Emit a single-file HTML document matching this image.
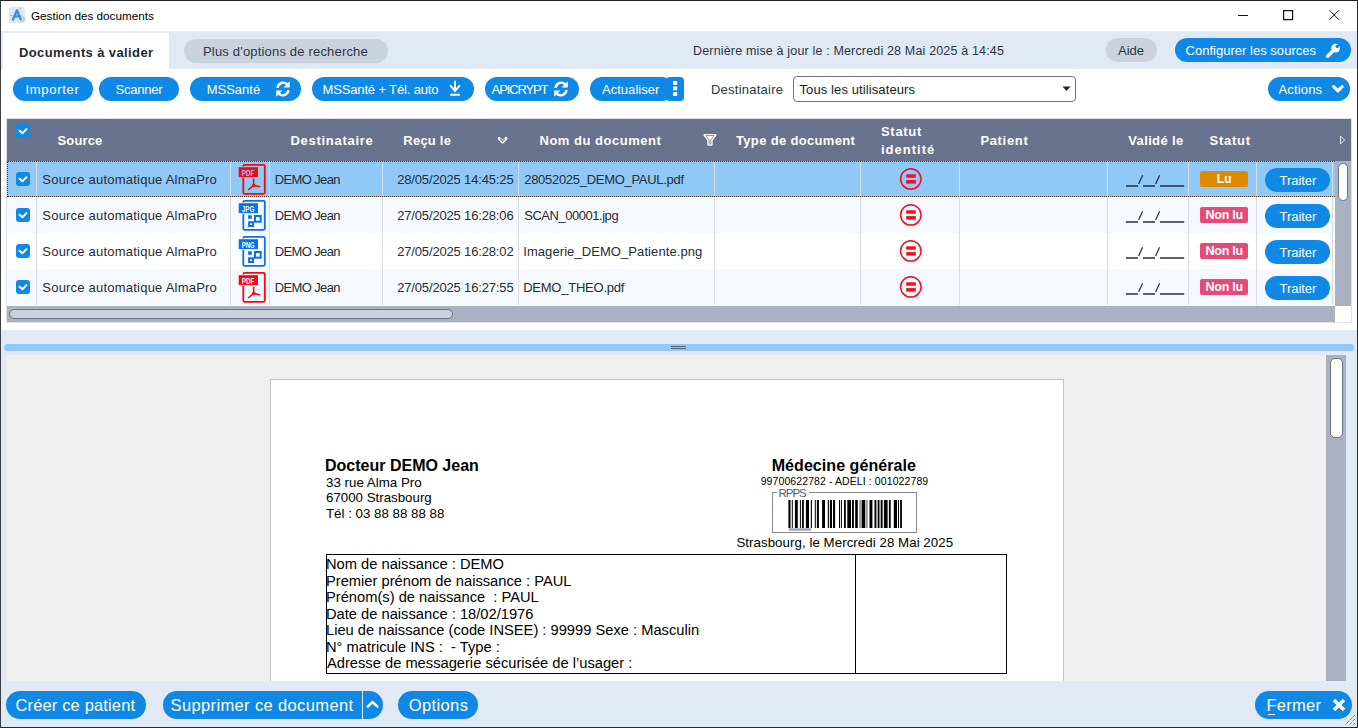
<!DOCTYPE html>
<html><head><meta charset="utf-8">
<style>
*{box-sizing:border-box;margin:0;padding:0}
html,body{width:1358px;height:728px;overflow:hidden;background:#fff;font-family:"Liberation Sans",sans-serif;position:relative}
.a{position:absolute}
.t{position:absolute;white-space:nowrap;line-height:1}
</style></head><body>
<svg class="a" style="left:9px;top:7px" width="17" height="17" viewBox="0 0 17 17"><rect x="0" y="0" width="16" height="16" rx="1.5" fill="#dfe8f3"/><path d="M3.6 13.4 L7.9 3.4 L12.2 13.4 M5.3 9.4 H10.6" stroke="#3d8fd8" stroke-width="2.4" fill="none" stroke-linejoin="round"/><path d="M9.5 3 L12 0.6 M1.5 8.5 L4 8.6 M11.5 8.6 q4.5 1.5 3.6 4.5 q-0.6 1.5 -2 1.3" stroke="#5a9bdc" stroke-width="0.9" fill="none" stroke-dasharray="1.4 0.7"/></svg>
<div class="t" style="left:31.00px;top:9.50px;font-size:11.7px;font-weight:400;color:#000;">Gestion des documents</div>
<svg class="a" style="left:1230px;top:5px" width="120" height="22"><path d="M8 10.5 H18" stroke="#111" stroke-width="1"/><rect x="53.6" y="5.6" width="9" height="9" stroke="#111" stroke-width="1.2" fill="none"/><path d="M99.4 5.2 L109 14.8 M109 5.2 L99.4 14.8" stroke="#111" stroke-width="1"/></svg>
<div class="a" style="left:1px;top:31px;width:1356px;height:38px;background:#e0e9f4"></div>
<div class="a" style="left:3px;top:33px;width:166px;height:36px;background:#fff"></div>
<div class="t" style="left:19.00px;top:46.00px;font-size:13px;font-weight:700;color:#1f2735;letter-spacing:0.383px;">Documents à valider</div>
<div class="a" style="left:184px;top:39px;width:204px;height:24px;background:#cad2dd;border-radius:12px"></div>
<div class="t" style="left:203.00px;top:45.00px;font-size:13px;font-weight:400;color:#2c3546;letter-spacing:0.181px;">Plus d'options de recherche</div>
<div class="t" style="left:693.00px;top:45.00px;font-size:12.5px;font-weight:400;color:#2c3546;letter-spacing:0.164px;">Dernière mise à jour le : Mercredi 28 Mai 2025 à 14:45</div>
<div class="a" style="left:1106px;top:38px;width:51px;height:24px;background:#cad2dd;border-radius:12px"></div>
<div class="t" style="left:1118.00px;top:44.00px;font-size:13px;font-weight:400;color:#2c3546;letter-spacing:-0.030px;">Aide</div>
<div class="a" style="left:1175px;top:38px;width:176px;height:24px;background:#0f88e6;border-radius:12px"></div>
<div class="t" style="left:1185.50px;top:44.00px;font-size:13px;font-weight:400;color:#fff;letter-spacing:0.021px;">Configurer les sources</div>
<svg class="a" style="left:1325px;top:43px" width="16" height="16" viewBox="0 0 16 16"><path d="M2.6 13.2 L9.8 6" stroke="#fff" stroke-width="3.6" stroke-linecap="round"/><circle cx="10.6" cy="5.1" r="4.4" fill="#fff"/><circle cx="12.2" cy="3.5" r="1.7" fill="#0f88e6"/><path d="M12.2 1.8 L16 -1 L17 4 L13.9 3.5 Z" fill="#0f88e6"/></svg>
<div class="a" style="left:13px;top:77px;width:80px;height:24px;background:#0f88e6;border-radius:12px"></div>
<div class="t" style="left:25.50px;top:83.00px;font-size:13px;font-weight:400;color:#fff;letter-spacing:0.704px;">Importer</div>
<div class="a" style="left:99px;top:77px;width:80px;height:24px;background:#0f88e6;border-radius:12px"></div>
<div class="t" style="left:115.50px;top:83.00px;font-size:13px;font-weight:400;color:#fff;letter-spacing:-0.215px;">Scanner</div>
<div class="a" style="left:190px;top:77px;width:111px;height:24px;background:#0f88e6;border-radius:12px"></div>
<div class="t" style="left:206.70px;top:83.00px;font-size:13px;font-weight:400;color:#fff;letter-spacing:-0.007px;">MSSanté</div>
<div class="a" style="left:312px;top:77px;width:162px;height:24px;background:#0f88e6;border-radius:12px"></div>
<div class="t" style="left:322.50px;top:83.00px;font-size:13px;font-weight:400;color:#fff;letter-spacing:-0.147px;">MSSanté + Tél. auto</div>
<div class="a" style="left:485px;top:77px;width:94px;height:24px;background:#0f88e6;border-radius:12px"></div>
<div class="t" style="left:491.60px;top:83.00px;font-size:13px;font-weight:400;color:#fff;letter-spacing:-1.120px;">APICRYPT</div>
<div class="a" style="left:590px;top:77px;width:84px;height:24px;background:#0f88e6;border-radius:12px"></div>
<div class="a" style="left:666px;top:77px;width:18px;height:24px;background:#0f88e6;border-radius:4px"></div>
<div class="t" style="left:602.00px;top:83.00px;font-size:13px;font-weight:400;color:#fff;letter-spacing:0.028px;">Actualiser</div>
<div class="t" style="left:711.00px;top:83.00px;font-size:13px;font-weight:400;color:#2c3546;letter-spacing:0.233px;">Destinataire</div>
<div class="a" style="left:793px;top:76px;width:283px;height:26px;border:1px solid #6e7789;border-radius:4px;background:#fff"></div>
<div class="t" style="left:799.50px;top:83.00px;font-size:13px;font-weight:400;color:#151b26;letter-spacing:0.103px;">Tous les utilisateurs</div>
<svg class="a" style="left:1062px;top:86px" width="10" height="6"><path d="M0.5 0.5 H8.5 L4.5 5 Z" fill="#222"/></svg>
<div class="a" style="left:1268px;top:77px;width:82px;height:24px;background:#0f88e6;border-radius:12px"></div>
<div class="t" style="left:1278.50px;top:83.00px;font-size:13px;font-weight:400;color:#fff;letter-spacing:0.145px;">Actions</div>
<svg class="a" style="left:275px;top:80px" width="16" height="18" viewBox="0 0 16 18"><path d="M2.6 8 A5.6 5.6 0 0 1 12.4 4.6" stroke="#fff" stroke-width="2.4" fill="none"/><path d="M14.8 1.2 L14.8 7.4 L8.6 7.4 Z" fill="#fff"/><path d="M13.4 10 A5.6 5.6 0 0 1 3.6 13.4" stroke="#fff" stroke-width="2.4" fill="none"/><path d="M1.2 16.8 L1.2 10.6 L7.4 10.6 Z" fill="#fff"/></svg>
<svg class="a" style="left:553px;top:80px" width="16" height="18" viewBox="0 0 16 18"><path d="M2.6 8 A5.6 5.6 0 0 1 12.4 4.6" stroke="#fff" stroke-width="2.4" fill="none"/><path d="M14.8 1.2 L14.8 7.4 L8.6 7.4 Z" fill="#fff"/><path d="M13.4 10 A5.6 5.6 0 0 1 3.6 13.4" stroke="#fff" stroke-width="2.4" fill="none"/><path d="M1.2 16.8 L1.2 10.6 L7.4 10.6 Z" fill="#fff"/></svg>
<svg class="a" style="left:447px;top:80px" width="16" height="18" viewBox="0 0 16 18"><path d="M8 0.8 V11.4" stroke="#fff" stroke-width="2"/><path d="M3.6 5.8 L8 10.8 L12.4 5.8" stroke="#fff" stroke-width="2" fill="none" stroke-linecap="round"/><path d="M4 14.7 H12" stroke="#fff" stroke-width="2" stroke-linecap="round"/></svg>
<svg class="a" style="left:671px;top:80px" width="8" height="18"><rect x="2" y="1.1" width="4.2" height="3.8" rx="0.6" fill="#fff"/><rect x="2" y="6.5" width="4.2" height="3.8" rx="0.6" fill="#fff"/><rect x="2" y="12.1" width="4.2" height="3.8" rx="0.6" fill="#fff"/></svg>
<svg class="a" style="left:1331px;top:83px" width="16" height="12"><path d="M2.6 3.6 L6.9 7.9 L11.2 3.6" stroke="#fff" stroke-width="3" fill="none" stroke-linecap="round" stroke-linejoin="round"/></svg>
<div class="a" style="left:6px;top:118px;width:1346px;height:205px;border:1px solid #e2e2e2;background:#fff"></div>
<div class="a" style="left:7px;top:119px;width:1344px;height:42px;background:#67738d"></div>
<svg class="a" style="left:16px;top:124px" width="14" height="14"><rect width="14" height="14" rx="3" fill="#0f88e6"/><path d="M3.5 6.7 L6.4 9.2 L10.5 5.1" stroke="#fff" stroke-width="2" fill="none" stroke-linecap="round" stroke-linejoin="round"/></svg>
<div class="t" style="left:57.50px;top:134.00px;font-size:13px;font-weight:700;color:#fff;letter-spacing:0.132px;">Source</div>
<div class="t" style="left:290.50px;top:134.00px;font-size:13px;font-weight:700;color:#fff;letter-spacing:0.710px;">Destinataire</div>
<div class="t" style="left:403.30px;top:134.00px;font-size:13px;font-weight:700;color:#fff;letter-spacing:0.231px;">Reçu le</div>
<div class="t" style="left:539.50px;top:134.00px;font-size:13px;font-weight:700;color:#fff;letter-spacing:0.516px;">Nom du document</div>
<div class="t" style="left:736.00px;top:134.00px;font-size:13px;font-weight:700;color:#fff;letter-spacing:0.330px;">Type de document</div>
<div class="t" style="left:881.00px;top:125.00px;font-size:13px;font-weight:700;color:#fff;letter-spacing:0.700px;">Statut</div>
<div class="t" style="left:881.00px;top:143.00px;font-size:13px;font-weight:700;color:#fff;letter-spacing:1.001px;">identité</div>
<div class="t" style="left:980.40px;top:134.00px;font-size:13px;font-weight:700;color:#fff;letter-spacing:0.665px;">Patient</div>
<div class="t" style="left:1128.30px;top:134.00px;font-size:13px;font-weight:700;color:#fff;letter-spacing:0.350px;">Validé le</div>
<div class="t" style="left:1209.50px;top:134.00px;font-size:13px;font-weight:700;color:#fff;letter-spacing:0.760px;">Statut</div>
<svg class="a" style="left:496px;top:134px" width="13" height="11"><path d="M3.2 4.4 L6.6 7.9 L10 4.4" stroke="#fff" stroke-width="3" fill="none" stroke-linejoin="round" stroke-linecap="round"/><path d="M3.9 4.6 L6.6 7.1 L9.3 4.6" stroke="#7d828c" stroke-width="1.2" fill="none"/></svg>
<svg class="a" style="left:702px;top:132px" width="15" height="15"><path d="M2.6 3.2 H13.4 L9.6 8.2 V12.6 H6.4 V8.2 Z" stroke="#fff" stroke-width="2.2" fill="#fff" stroke-linejoin="round"/><path d="M3.6 3.4 H12.4 M4.4 4.4 L7.2 7.8 V12.6 M11.6 4.4 L8.8 7.8 V12.6" stroke="#6b6f78" stroke-width="0.8" fill="none"/></svg>
<svg class="a" style="left:1339px;top:135px" width="7" height="10"><path d="M1.5 1 L5.5 5 L1.5 9 Z" stroke="#e6e9ef" stroke-width="1" fill="none"/></svg>
<div class="a" style="left:7px;top:161px;width:1328px;height:36px;background:#90c8f6"></div>
<div class="a" style="left:36px;top:161px;width:1px;height:36px;background:#d9dce1"></div>
<div class="a" style="left:230px;top:161px;width:1px;height:36px;background:#d9dce1"></div>
<div class="a" style="left:269px;top:161px;width:1px;height:36px;background:#d9dce1"></div>
<div class="a" style="left:382px;top:161px;width:1px;height:36px;background:#d9dce1"></div>
<div class="a" style="left:518px;top:161px;width:1px;height:36px;background:#d9dce1"></div>
<div class="a" style="left:714px;top:161px;width:1px;height:36px;background:#d9dce1"></div>
<div class="a" style="left:860px;top:161px;width:1px;height:36px;background:#d9dce1"></div>
<div class="a" style="left:959px;top:161px;width:1px;height:36px;background:#d9dce1"></div>
<div class="a" style="left:1107px;top:161px;width:1px;height:36px;background:#d9dce1"></div>
<div class="a" style="left:1188px;top:161px;width:1px;height:36px;background:#d9dce1"></div>
<div class="a" style="left:1256px;top:161px;width:1px;height:36px;background:#d9dce1"></div>
<div class="a" style="left:1332px;top:161px;width:1px;height:36px;background:#d9dce1"></div>
<svg class="a" style="left:16px;top:172px" width="14" height="14"><rect width="14" height="14" rx="3" fill="#0f88e6"/><path d="M3.5 6.7 L6.4 9.2 L10.5 5.1" stroke="#fff" stroke-width="2" fill="none" stroke-linecap="round" stroke-linejoin="round"/></svg>
<div class="t" style="left:42.30px;top:173.00px;font-size:13px;font-weight:400;color:#262c38;letter-spacing:0.217px;">Source automatique AlmaPro</div>
<div class="t" style="left:274.80px;top:173.00px;font-size:13px;font-weight:400;color:#262c38;letter-spacing:-0.634px;">DEMO Jean</div>
<div class="t" style="left:397.20px;top:173.00px;font-size:13px;font-weight:400;color:#262c38;letter-spacing:-0.158px;">28/05/2025 14:45:25</div>
<div class="t" style="left:524.20px;top:173.00px;font-size:13px;font-weight:400;color:#262c38;letter-spacing:-0.289px;">28052025_DEMO_PAUL.pdf</div>
<svg class="a" style="left:1120px;top:171px" width="70" height="20"><path d="M6 15 H18 M23 15 H35 M40 15 H64.2" stroke="#262c38" stroke-width="1.3"/><path d="M18.6 13 L22.6 4.2 M35.6 13 L39.6 4.2" stroke="#262c38" stroke-width="1.2"/></svg>
<svg class="a" style="left:238px;top:164px" width="29" height="32" viewBox="0 0 29 32"><rect x="5.3" y="0.9" width="21.5" height="28.9" rx="1.2" stroke="#f00a14" stroke-width="1.8" fill="none"/><rect x="0" y="2.4" width="21" height="11.6" fill="#90c8f6"/><rect x="0.7" y="3.2" width="19.3" height="9.9" fill="#f00a14"/><text x="10.1" y="11.5" font-family="Liberation Sans" font-weight="bold" font-size="8.4" fill="#90c8f6" text-anchor="middle" textLength="12.8" lengthAdjust="spacingAndGlyphs">PDF</text><path d="M15.6 15.3 V20.8 M15.2 21.8 L10.6 25.5 M16.4 21.6 L21.7 22.7" stroke="#f00a14" stroke-width="1.6" fill="none" stroke-linecap="round"/><circle cx="15.6" cy="21.5" r="1.2" stroke="#f00a14" stroke-width="1.1" fill="none"/></svg>
<svg class="a" style="left:899px;top:168px" width="24" height="24"><circle cx="11.8" cy="10.9" r="10.2" stroke="#fa0a1a" stroke-width="1.5" fill="none"/><rect x="7.2" y="6.3" width="9.6" height="3.4" fill="#fa0a1a"/><rect x="7.2" y="12.1" width="9.6" height="3.5" fill="#fa0a1a"/></svg>
<div class="a" style="left:1200px;top:171px;width:48px;height:16px;background:#df8a00;border-radius:2px"></div>
<div class="t" style="left:1216.80px;top:173.00px;font-size:12px;font-weight:700;color:#fff;">Lu</div>
<div class="a" style="left:1265px;top:168px;width:65px;height:24px;background:#0f88e6;border-radius:12px"></div>
<div class="t" style="left:1279.50px;top:174.00px;font-size:13px;font-weight:400;color:#fff;letter-spacing:-0.041px;">Traiter</div>
<div class="a" style="left:7px;top:197px;width:1328px;height:36px;background:#f5f9fe"></div>
<div class="a" style="left:36px;top:197px;width:1px;height:36px;background:#d9dce1"></div>
<div class="a" style="left:230px;top:197px;width:1px;height:36px;background:#d9dce1"></div>
<div class="a" style="left:269px;top:197px;width:1px;height:36px;background:#d9dce1"></div>
<div class="a" style="left:382px;top:197px;width:1px;height:36px;background:#d9dce1"></div>
<div class="a" style="left:518px;top:197px;width:1px;height:36px;background:#d9dce1"></div>
<div class="a" style="left:714px;top:197px;width:1px;height:36px;background:#d9dce1"></div>
<div class="a" style="left:860px;top:197px;width:1px;height:36px;background:#d9dce1"></div>
<div class="a" style="left:959px;top:197px;width:1px;height:36px;background:#d9dce1"></div>
<div class="a" style="left:1107px;top:197px;width:1px;height:36px;background:#d9dce1"></div>
<div class="a" style="left:1188px;top:197px;width:1px;height:36px;background:#d9dce1"></div>
<div class="a" style="left:1256px;top:197px;width:1px;height:36px;background:#d9dce1"></div>
<div class="a" style="left:1332px;top:197px;width:1px;height:36px;background:#d9dce1"></div>
<svg class="a" style="left:16px;top:208px" width="14" height="14"><rect width="14" height="14" rx="3" fill="#0f88e6"/><path d="M3.5 6.7 L6.4 9.2 L10.5 5.1" stroke="#fff" stroke-width="2" fill="none" stroke-linecap="round" stroke-linejoin="round"/></svg>
<div class="t" style="left:42.30px;top:209.00px;font-size:13px;font-weight:400;color:#262c38;letter-spacing:0.217px;">Source automatique AlmaPro</div>
<div class="t" style="left:274.80px;top:209.00px;font-size:13px;font-weight:400;color:#262c38;letter-spacing:-0.634px;">DEMO Jean</div>
<div class="t" style="left:397.20px;top:209.00px;font-size:13px;font-weight:400;color:#262c38;letter-spacing:-0.158px;">27/05/2025 16:28:06</div>
<div class="t" style="left:524.20px;top:209.00px;font-size:13px;font-weight:400;color:#262c38;letter-spacing:-0.464px;">SCAN_00001.jpg</div>
<svg class="a" style="left:1120px;top:207px" width="70" height="20"><path d="M6 15 H18 M23 15 H35 M40 15 H64.2" stroke="#262c38" stroke-width="1.3"/><path d="M18.6 13 L22.6 4.2 M35.6 13 L39.6 4.2" stroke="#262c38" stroke-width="1.2"/></svg>
<svg class="a" style="left:238px;top:200px" width="29" height="32" viewBox="0 0 29 32"><rect x="5.3" y="0.9" width="21.5" height="28.9" rx="1.2" stroke="#0a6ef0" stroke-width="1.8" fill="none"/><rect x="0" y="2.4" width="21" height="11.6" fill="#f5f9fe"/><rect x="0.7" y="3.2" width="19.3" height="9.9" fill="#0a6ef0"/><text x="10.1" y="11.5" font-family="Liberation Sans" font-weight="bold" font-size="8.4" fill="#f5f9fe" text-anchor="middle" textLength="12.8" lengthAdjust="spacingAndGlyphs">JPG</text><rect x="10.1" y="15.3" width="3.7" height="3.5" fill="#0a6ef0"/><rect x="17" y="16" width="5.7" height="5.7" stroke="#0a6ef0" stroke-width="2" fill="none"/><rect x="11.1" y="22.3" width="3.9" height="3.7" stroke="#0a6ef0" stroke-width="2" fill="none"/></svg>
<svg class="a" style="left:899px;top:204px" width="24" height="24"><circle cx="11.8" cy="10.9" r="10.2" stroke="#fa0a1a" stroke-width="1.5" fill="none"/><rect x="7.2" y="6.3" width="9.6" height="3.4" fill="#fa0a1a"/><rect x="7.2" y="12.1" width="9.6" height="3.5" fill="#fa0a1a"/></svg>
<div class="a" style="left:1200px;top:207px;width:48px;height:16px;background:#e54b79;border-radius:2px"></div>
<div class="t" style="left:1205.50px;top:209.00px;font-size:12.5px;font-weight:700;color:#fff;letter-spacing:-0.249px;">Non lu</div>
<div class="a" style="left:1265px;top:204px;width:65px;height:24px;background:#0f88e6;border-radius:12px"></div>
<div class="t" style="left:1279.50px;top:210.00px;font-size:13px;font-weight:400;color:#fff;letter-spacing:-0.041px;">Traiter</div>
<div class="a" style="left:7px;top:233px;width:1328px;height:36px;background:#ffffff"></div>
<div class="a" style="left:36px;top:233px;width:1px;height:36px;background:#d9dce1"></div>
<div class="a" style="left:230px;top:233px;width:1px;height:36px;background:#d9dce1"></div>
<div class="a" style="left:269px;top:233px;width:1px;height:36px;background:#d9dce1"></div>
<div class="a" style="left:382px;top:233px;width:1px;height:36px;background:#d9dce1"></div>
<div class="a" style="left:518px;top:233px;width:1px;height:36px;background:#d9dce1"></div>
<div class="a" style="left:714px;top:233px;width:1px;height:36px;background:#d9dce1"></div>
<div class="a" style="left:860px;top:233px;width:1px;height:36px;background:#d9dce1"></div>
<div class="a" style="left:959px;top:233px;width:1px;height:36px;background:#d9dce1"></div>
<div class="a" style="left:1107px;top:233px;width:1px;height:36px;background:#d9dce1"></div>
<div class="a" style="left:1188px;top:233px;width:1px;height:36px;background:#d9dce1"></div>
<div class="a" style="left:1256px;top:233px;width:1px;height:36px;background:#d9dce1"></div>
<div class="a" style="left:1332px;top:233px;width:1px;height:36px;background:#d9dce1"></div>
<svg class="a" style="left:16px;top:244px" width="14" height="14"><rect width="14" height="14" rx="3" fill="#0f88e6"/><path d="M3.5 6.7 L6.4 9.2 L10.5 5.1" stroke="#fff" stroke-width="2" fill="none" stroke-linecap="round" stroke-linejoin="round"/></svg>
<div class="t" style="left:42.30px;top:245.00px;font-size:13px;font-weight:400;color:#262c38;letter-spacing:0.217px;">Source automatique AlmaPro</div>
<div class="t" style="left:274.80px;top:245.00px;font-size:13px;font-weight:400;color:#262c38;letter-spacing:-0.634px;">DEMO Jean</div>
<div class="t" style="left:397.20px;top:245.00px;font-size:13px;font-weight:400;color:#262c38;letter-spacing:-0.158px;">27/05/2025 16:28:02</div>
<div class="t" style="left:523.20px;top:245.00px;font-size:13px;font-weight:400;color:#262c38;letter-spacing:0.080px;">Imagerie_DEMO_Patiente.png</div>
<svg class="a" style="left:1120px;top:243px" width="70" height="20"><path d="M6 15 H18 M23 15 H35 M40 15 H64.2" stroke="#262c38" stroke-width="1.3"/><path d="M18.6 13 L22.6 4.2 M35.6 13 L39.6 4.2" stroke="#262c38" stroke-width="1.2"/></svg>
<svg class="a" style="left:238px;top:236px" width="29" height="32" viewBox="0 0 29 32"><rect x="5.3" y="0.9" width="21.5" height="28.9" rx="1.2" stroke="#0a6ef0" stroke-width="1.8" fill="none"/><rect x="0" y="2.4" width="21" height="11.6" fill="#ffffff"/><rect x="0.7" y="3.2" width="19.3" height="9.9" fill="#0a6ef0"/><text x="10.1" y="11.5" font-family="Liberation Sans" font-weight="bold" font-size="8.4" fill="#ffffff" text-anchor="middle" textLength="12.8" lengthAdjust="spacingAndGlyphs">PNG</text><rect x="10.1" y="15.3" width="3.7" height="3.5" fill="#0a6ef0"/><rect x="17" y="16" width="5.7" height="5.7" stroke="#0a6ef0" stroke-width="2" fill="none"/><rect x="11.1" y="22.3" width="3.9" height="3.7" stroke="#0a6ef0" stroke-width="2" fill="none"/></svg>
<svg class="a" style="left:899px;top:240px" width="24" height="24"><circle cx="11.8" cy="10.9" r="10.2" stroke="#fa0a1a" stroke-width="1.5" fill="none"/><rect x="7.2" y="6.3" width="9.6" height="3.4" fill="#fa0a1a"/><rect x="7.2" y="12.1" width="9.6" height="3.5" fill="#fa0a1a"/></svg>
<div class="a" style="left:1200px;top:243px;width:48px;height:16px;background:#e54b79;border-radius:2px"></div>
<div class="t" style="left:1205.50px;top:245.00px;font-size:12.5px;font-weight:700;color:#fff;letter-spacing:-0.249px;">Non lu</div>
<div class="a" style="left:1265px;top:240px;width:65px;height:24px;background:#0f88e6;border-radius:12px"></div>
<div class="t" style="left:1279.50px;top:246.00px;font-size:13px;font-weight:400;color:#fff;letter-spacing:-0.041px;">Traiter</div>
<div class="a" style="left:7px;top:269px;width:1328px;height:36px;background:#f5f9fe"></div>
<div class="a" style="left:36px;top:269px;width:1px;height:36px;background:#d9dce1"></div>
<div class="a" style="left:230px;top:269px;width:1px;height:36px;background:#d9dce1"></div>
<div class="a" style="left:269px;top:269px;width:1px;height:36px;background:#d9dce1"></div>
<div class="a" style="left:382px;top:269px;width:1px;height:36px;background:#d9dce1"></div>
<div class="a" style="left:518px;top:269px;width:1px;height:36px;background:#d9dce1"></div>
<div class="a" style="left:714px;top:269px;width:1px;height:36px;background:#d9dce1"></div>
<div class="a" style="left:860px;top:269px;width:1px;height:36px;background:#d9dce1"></div>
<div class="a" style="left:959px;top:269px;width:1px;height:36px;background:#d9dce1"></div>
<div class="a" style="left:1107px;top:269px;width:1px;height:36px;background:#d9dce1"></div>
<div class="a" style="left:1188px;top:269px;width:1px;height:36px;background:#d9dce1"></div>
<div class="a" style="left:1256px;top:269px;width:1px;height:36px;background:#d9dce1"></div>
<div class="a" style="left:1332px;top:269px;width:1px;height:36px;background:#d9dce1"></div>
<svg class="a" style="left:16px;top:280px" width="14" height="14"><rect width="14" height="14" rx="3" fill="#0f88e6"/><path d="M3.5 6.7 L6.4 9.2 L10.5 5.1" stroke="#fff" stroke-width="2" fill="none" stroke-linecap="round" stroke-linejoin="round"/></svg>
<div class="t" style="left:42.30px;top:281.00px;font-size:13px;font-weight:400;color:#262c38;letter-spacing:0.217px;">Source automatique AlmaPro</div>
<div class="t" style="left:274.80px;top:281.00px;font-size:13px;font-weight:400;color:#262c38;letter-spacing:-0.634px;">DEMO Jean</div>
<div class="t" style="left:397.20px;top:281.00px;font-size:13px;font-weight:400;color:#262c38;letter-spacing:-0.158px;">27/05/2025 16:27:55</div>
<div class="t" style="left:523.20px;top:281.00px;font-size:13px;font-weight:400;color:#262c38;letter-spacing:-0.234px;">DEMO_THEO.pdf</div>
<svg class="a" style="left:1120px;top:279px" width="70" height="20"><path d="M6 15 H18 M23 15 H35 M40 15 H64.2" stroke="#262c38" stroke-width="1.3"/><path d="M18.6 13 L22.6 4.2 M35.6 13 L39.6 4.2" stroke="#262c38" stroke-width="1.2"/></svg>
<svg class="a" style="left:238px;top:272px" width="29" height="32" viewBox="0 0 29 32"><rect x="5.3" y="0.9" width="21.5" height="28.9" rx="1.2" stroke="#f00a14" stroke-width="1.8" fill="none"/><rect x="0" y="2.4" width="21" height="11.6" fill="#f5f9fe"/><rect x="0.7" y="3.2" width="19.3" height="9.9" fill="#f00a14"/><text x="10.1" y="11.5" font-family="Liberation Sans" font-weight="bold" font-size="8.4" fill="#f5f9fe" text-anchor="middle" textLength="12.8" lengthAdjust="spacingAndGlyphs">PDF</text><path d="M15.6 15.3 V20.8 M15.2 21.8 L10.6 25.5 M16.4 21.6 L21.7 22.7" stroke="#f00a14" stroke-width="1.6" fill="none" stroke-linecap="round"/><circle cx="15.6" cy="21.5" r="1.2" stroke="#f00a14" stroke-width="1.1" fill="none"/></svg>
<svg class="a" style="left:899px;top:276px" width="24" height="24"><circle cx="11.8" cy="10.9" r="10.2" stroke="#fa0a1a" stroke-width="1.5" fill="none"/><rect x="7.2" y="6.3" width="9.6" height="3.4" fill="#fa0a1a"/><rect x="7.2" y="12.1" width="9.6" height="3.5" fill="#fa0a1a"/></svg>
<div class="a" style="left:1200px;top:279px;width:48px;height:16px;background:#e54b79;border-radius:2px"></div>
<div class="t" style="left:1205.50px;top:281.00px;font-size:12.5px;font-weight:700;color:#fff;letter-spacing:-0.249px;">Non lu</div>
<div class="a" style="left:1265px;top:276px;width:65px;height:24px;background:#0f88e6;border-radius:12px"></div>
<div class="t" style="left:1279.50px;top:282.00px;font-size:13px;font-weight:400;color:#fff;letter-spacing:-0.041px;">Traiter</div>
<div class="a" style="left:7px;top:161px;width:1328px;height:36px;border-top:1px dotted #5a3a1a;border-bottom:1px dotted #5a3a1a;border-left:1px dotted #5a3a1a"></div>
<div class="a" style="left:1335px;top:161px;width:16px;height:145px;background:#aab2c2"></div>
<div class="a" style="left:1338px;top:163px;width:10px;height:38px;background:#fff;border:1px solid #67738d;border-radius:4.5px"></div>
<div class="a" style="left:7px;top:306px;width:1328px;height:16px;background:#aab2c2"></div>
<div class="a" style="left:9px;top:309px;width:444px;height:10px;background:#c9d1dc;border:1px solid #67738d;border-radius:5px"></div>
<div class="a" style="left:1335px;top:306px;width:16px;height:16px;background:#fff"></div>
<div class="a" style="left:1px;top:330px;width:1356px;height:351px;background:#e0e9f4"></div>
<div class="a" style="left:4px;top:344px;width:1350px;height:7px;background:#90c8f6;border-radius:4px"></div>
<div class="a" style="left:671px;top:346px;width:15px;height:1px;background:#5a6270"></div>
<div class="a" style="left:671px;top:348px;width:15px;height:1px;background:#5a6270"></div>
<div class="a" style="left:6px;top:355px;width:1320px;height:326px;background:#efefef"></div>
<div class="a" style="left:1326px;top:355px;width:20px;height:326px;background:#aab2c2"></div>
<div class="a" style="left:1330px;top:358px;width:13px;height:80px;background:#fff;border:1px solid #67738d;border-radius:5px"></div>
<div class="a" style="left:270px;top:379px;width:794px;height:302px;background:#fff;border:1px solid #c3c3c3;border-bottom:none"></div>
<div class="t" style="left:325.00px;top:458.00px;font-size:16px;font-weight:700;color:#000;">Docteur DEMO Jean</div>
<div class="t" style="left:326.00px;top:475.70px;font-size:13.3px;font-weight:400;color:#000;letter-spacing:0.023px;">33 rue Alma Pro</div>
<div class="t" style="left:326.00px;top:491.00px;font-size:13.3px;font-weight:400;color:#000;">67000 Strasbourg</div>
<div class="t" style="left:326.00px;top:506.50px;font-size:13.3px;font-weight:400;color:#000;">Tél : 03 88 88 88 88</div>
<div class="t" style="left:771.70px;top:457.50px;font-size:16px;font-weight:700;color:#000;letter-spacing:0.064px;">Médecine générale</div>
<div class="t" style="left:760.70px;top:475.80px;font-size:10.5px;font-weight:400;color:#000;letter-spacing:0.094px;">99700622782 - ADELI : 001022789</div>
<div class="a" style="left:772px;top:492px;width:145px;height:41px;border:1px solid #8a8a8a"></div>
<div class="a" style="left:777px;top:487px;width:32px;height:10px;background:#fff"></div>
<div class="t" style="left:778.50px;top:488.00px;font-size:11.5px;font-weight:400;color:#4d5878;letter-spacing:-1.049px;">RPPS</div>
<svg class="a" style="left:786px;top:500px" width="120" height="32"><rect x="2.40" y="0" width="2.10" height="28" fill="#000"/><rect x="5.80" y="0" width="1.00" height="28" fill="#000"/><rect x="8.90" y="0" width="2.90" height="28" fill="#000"/><rect x="13.90" y="0" width="1.00" height="28" fill="#000"/><rect x="16.00" y="0" width="1.80" height="28" fill="#000"/><rect x="19.90" y="0" width="3.10" height="28" fill="#000"/><rect x="24.80" y="0" width="1.10" height="28" fill="#000"/><rect x="28.80" y="0" width="1.00" height="28" fill="#000"/><rect x="30.90" y="0" width="2.00" height="28" fill="#000"/><rect x="36.10" y="0" width="2.90" height="28" fill="#000"/><rect x="41.80" y="0" width="1.10" height="28" fill="#000"/><rect x="43.90" y="0" width="2.10" height="28" fill="#000"/><rect x="47.00" y="0" width="2.10" height="28" fill="#000"/><rect x="53.00" y="0" width="1.00" height="28" fill="#000"/><rect x="54.90" y="0" width="1.00" height="28" fill="#000"/><rect x="58.00" y="0" width="1.80" height="28" fill="#000"/><rect x="61.30" y="0" width="3.70" height="28" fill="#000"/><rect x="66.00" y="0" width="1.90" height="28" fill="#000"/><rect x="69.20" y="0" width="2.60" height="28" fill="#000"/><rect x="73.10" y="0" width="2.10" height="28" fill="#999"/><rect x="75.70" y="0" width="3.40" height="28" fill="#000"/><rect x="79.40" y="0" width="2.30" height="28" fill="#999"/><rect x="83.50" y="0" width="2.90" height="28" fill="#000"/><rect x="88.50" y="0" width="1.80" height="28" fill="#000"/><rect x="90.30" y="0" width="1.30" height="28" fill="#999"/><rect x="91.90" y="0" width="1.60" height="28" fill="#000"/><rect x="93.60" y="0" width="1.20" height="28" fill="#999"/><rect x="95.00" y="0" width="1.60" height="28" fill="#000"/><rect x="97.90" y="0" width="3.70" height="28" fill="#000"/><rect x="102.90" y="0" width="1.80" height="28" fill="#000"/><rect x="107.80" y="0" width="3.20" height="28" fill="#000"/><rect x="112.00" y="0" width="1.00" height="28" fill="#000"/><rect x="114.10" y="0" width="1.80" height="28" fill="#000"/><rect x="3" y="28.2" width="22" height="2.6" fill="#8a90a8" opacity="0.8"/></svg>
<div class="t" style="left:736.40px;top:536.30px;font-size:13.3px;font-weight:400;color:#000;letter-spacing:0.048px;">Strasbourg, le Mercredi 28 Mai 2025</div>
<div class="a" style="left:326px;top:554px;width:681px;height:120px;border:1px solid #000"></div>
<div class="a" style="left:855px;top:554px;width:1px;height:120px;background:#000"></div>
<div class="t" style="left:326.00px;top:557.40px;font-size:14.7px;font-weight:400;color:#000;">Nom de naissance : DEMO</div>
<div class="t" style="left:326.00px;top:573.90px;font-size:14.7px;font-weight:400;color:#000;">Premier prénom de naissance : PAUL</div>
<div class="t" style="left:326.00px;top:590.40px;font-size:14.7px;font-weight:400;color:#000;">Prénom(s) de naissance&nbsp; : PAUL</div>
<div class="t" style="left:326.00px;top:606.90px;font-size:14.7px;font-weight:400;color:#000;">Date de naissance : 18/02/1976</div>
<div class="t" style="left:326.00px;top:623.40px;font-size:14.7px;font-weight:400;color:#000;">Lieu de naissance (code INSEE) : 99999 Sexe : Masculin</div>
<div class="t" style="left:326.00px;top:639.90px;font-size:14.7px;font-weight:400;color:#000;">N° matricule INS :&nbsp; - Type :</div>
<div class="t" style="left:327.00px;top:656.40px;font-size:14.7px;font-weight:400;color:#000;">Adresse de messagerie sécurisée de l’usager :</div>
<div class="a" style="left:1px;top:681px;width:1356px;height:46px;background:#e0e9f4"></div>
<div class="a" style="left:5.5px;top:691px;width:140px;height:28px;background:#0f88e6;border-radius:14px"></div>
<div class="t" style="left:15.50px;top:697.00px;font-size:16.5px;font-weight:400;color:#fff;letter-spacing:0.146px;">Créer ce patient</div>
<div class="a" style="left:163px;top:691px;width:220px;height:28px;background:#0f88e6;border-radius:14px"></div>
<div class="a" style="left:362px;top:691px;width:1px;height:28px;background:#dfe9f4"></div>
<div class="t" style="left:170.50px;top:697.00px;font-size:16.5px;font-weight:400;color:#fff;letter-spacing:0.371px;">Supprimer ce document</div>
<svg class="a" style="left:366px;top:699px" width="14" height="11"><path d="M1.8 7.6 L6.6 3 L11.4 7.6" stroke="#fff" stroke-width="2.5" fill="none" stroke-linecap="round" stroke-linejoin="round"/></svg>
<div class="a" style="left:398px;top:691px;width:80px;height:28px;background:#0f88e6;border-radius:14px"></div>
<div class="t" style="left:408.70px;top:697.00px;font-size:16.5px;font-weight:400;color:#fff;letter-spacing:0.398px;">Options</div>
<div class="a" style="left:1254.5px;top:691px;width:97px;height:28px;background:#0f88e6;border-radius:14px"></div>
<div class="t" style="left:1266.40px;top:697.00px;font-size:16.5px;font-weight:400;color:#fff;letter-spacing:0.266px;">Fermer</div>
<div class="a" style="left:1267.5px;top:714px;width:7px;height:1px;background:#fff"></div>
<svg class="a" style="left:1332px;top:698px" width="14" height="14"><path d="M2 2 L12 12 M12 2 L2 12" stroke="#fff" stroke-width="3.4"/></svg>
<svg class="a" style="left:1344px;top:714px" width="12" height="12"><path d="M11 1 L1 11 M11 5 L5 11 M11 9 L9 11" stroke="#555" stroke-width="0.9" stroke-dasharray="1.2 0.8"/></svg>
<div class="a" style="left:0;top:0;width:1358px;height:1px;background:#1e1e1e"></div>
<div class="a" style="left:0;top:0;width:1px;height:728px;background:#3a3d42"></div>
<div class="a" style="left:1357px;top:0;width:1px;height:728px;background:#2a2a2a"></div>
<div class="a" style="left:0;top:727px;width:1358px;height:1px;background:#2a2a2a"></div>
</body></html>
